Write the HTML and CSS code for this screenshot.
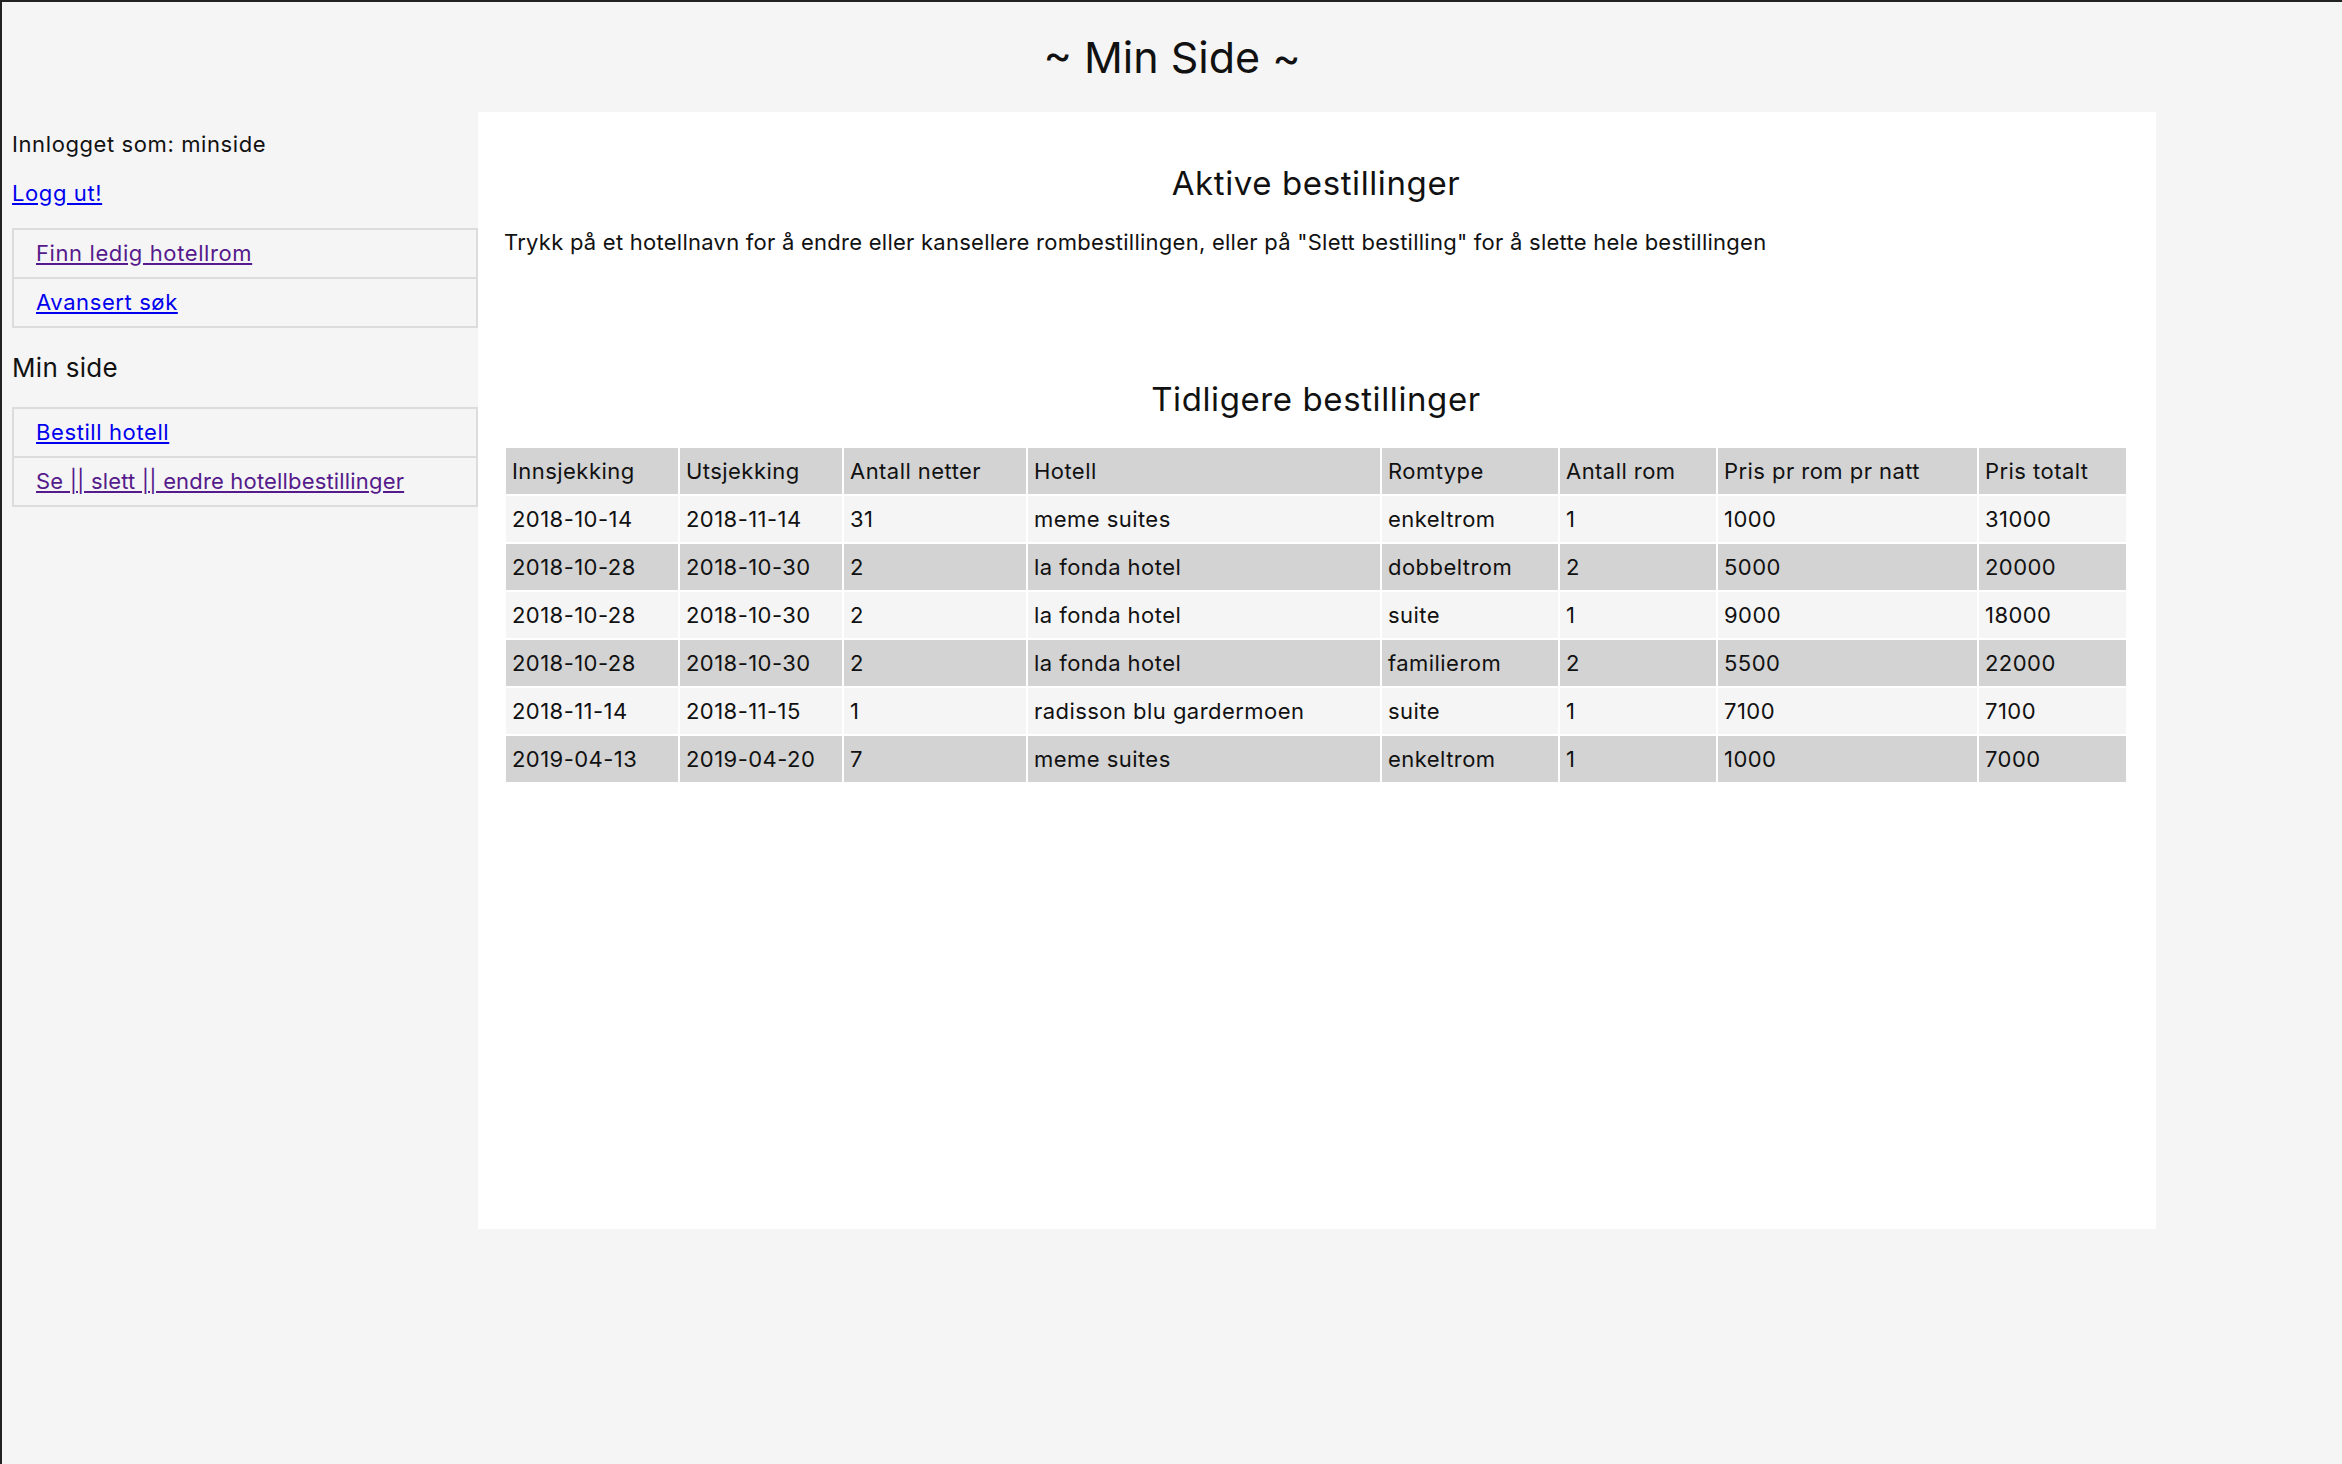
FILE: index.html
```html
<!DOCTYPE html>
<html lang="no">
<head>
<meta charset="utf-8">
<title>Min Side</title>
<link rel="stylesheet" href="styles.css">
</head>
<body>
<header class="top">
  <h1 class="page-title">~ Min Side ~</h1>
</header>
<div class="layout">
  <aside class="sidebar">
    <p class="login">Innlogget som: minside</p>
    <p class="logout"><a href="#" class="link">Logg ut!</a></p>
    <ul class="nav">
      <li class="nav-item"><a href="#" class="link visited">Finn ledig hotellrom</a></li>
      <li class="nav-item"><a href="#" class="link">Avansert søk</a></li>
    </ul>
    <h3 class="side-heading">Min side</h3>
    <ul class="nav">
      <li class="nav-item"><a href="#" class="link">Bestill hotell</a></li>
      <li class="nav-item"><a href="#" class="link visited tight">Se || slett || endre hotellbestillinger</a></li>
    </ul>
  </aside>
  <main class="content">
    <section class="active">
      <h2 class="section-title">Aktive bestillinger</h2>
      <p class="hint">Trykk på et hotellnavn for å endre eller kansellere rombestillingen, eller på "Slett bestilling" for å slette hele bestillingen</p>
    </section>
    <section class="history">
      <h2 class="section-title">Tidligere bestillinger</h2>
      <table class="orders">
        <thead>
          <tr><th>Innsjekking</th><th>Utsjekking</th><th>Antall netter</th><th>Hotell</th><th>Romtype</th><th>Antall rom</th><th>Pris pr rom pr natt</th><th>Pris totalt</th></tr>
        </thead>
        <tbody>
          <tr><td>2018-10-14</td><td>2018-11-14</td><td>31</td><td>meme suites</td><td>enkeltrom</td><td>1</td><td>1000</td><td>31000</td></tr>
          <tr><td>2018-10-28</td><td>2018-10-30</td><td>2</td><td>la fonda hotel</td><td>dobbeltrom</td><td>2</td><td>5000</td><td>20000</td></tr>
          <tr><td>2018-10-28</td><td>2018-10-30</td><td>2</td><td>la fonda hotel</td><td>suite</td><td>1</td><td>9000</td><td>18000</td></tr>
          <tr><td>2018-10-28</td><td>2018-10-30</td><td>2</td><td>la fonda hotel</td><td>familierom</td><td>2</td><td>5500</td><td>22000</td></tr>
          <tr><td>2018-11-14</td><td>2018-11-15</td><td>1</td><td>radisson blu gardermoen</td><td>suite</td><td>1</td><td>7100</td><td>7100</td></tr>
          <tr><td>2019-04-13</td><td>2019-04-20</td><td>7</td><td>meme suites</td><td>enkeltrom</td><td>1</td><td>1000</td><td>7000</td></tr>
        </tbody>
      </table>
    </section>
  </main>
</div>
</body>
</html>
```
FILE: styles.css
```css
html {
  background: #f5f5f5;
}
body {
  margin: 0;
  min-height: 100vh;
  box-sizing: border-box;
  border-top: 2px solid #222;
  border-left: 2px solid #222;
  background: #f5f5f5;
  color: #111;
  font-family: "Inter", "Open Sans", sans-serif;
  font-size: 22px;
  line-height: 30px;
  letter-spacing: 0.45px;
}
.top {
  height: 110px;
  padding-top: 30px;
  box-sizing: border-box;
}
.page-title {
  margin: 0;
  text-align: center;
  font-weight: 400;
  font-size: 43px;
  line-height: 50px;
  letter-spacing: 0;
}
.layout {
  display: flex;
  align-items: flex-start;
  padding-left: 10px;
}
.sidebar {
  width: 466px;
  flex: none;
  letter-spacing: 0.6px;
}
.login {
  margin: 17px 0 0 0;
}
.logout {
  margin: 19px 0 0 0;
}
.link {
  color: #0000ee;
}
.link.visited {
  color: #551a8b;
}
.link.tight {
  letter-spacing: 0.17px;
}
.nav {
  list-style: none;
  margin: 20px 0 0 0;
  padding: 0;
  border: 2px solid #dcdcdc;
}
.nav-item {
  padding: 8px 22px 9px;
}
.nav-item + .nav-item {
  border-top: 2px solid #dcdcdc;
}
.side-heading {
  margin: 24px 0 23px 0;
  font-weight: 400;
  font-size: 26px;
  line-height: 32px;
  letter-spacing: 0.3px;
}
.content {
  width: 1678px;
  flex: none;
  min-height: 1117px;
  box-sizing: border-box;
  background: #fff;
  padding: 51px 28px 0 26px;
}
.section-title {
  margin: 0;
  text-align: center;
  font-weight: 400;
  font-size: 33px;
  line-height: 40px;
  letter-spacing: 0.6px;
}
.hint {
  margin: 24px 0 0 0;
  letter-spacing: 0.25px;
}
.history {
  margin-top: 122px;
}
.orders {
  margin-top: 27px;
  width: 100%;
  table-layout: fixed;
  border-spacing: 2px;
  font-size: 22px;
}
.orders th,
.orders td {
  text-align: left;
  font-weight: 400;
  padding: 8px 6px;
  line-height: 30px;
  white-space: nowrap;
}
.orders thead th {
  background: #d3d3d3;
}
.orders tbody tr:nth-child(odd) td {
  background: #f5f5f5;
}
.orders tbody tr:nth-child(even) td {
  background: #d3d3d3;
}
.orders th:nth-child(1) { width: 160px; }
.orders th:nth-child(2) { width: 150px; }
.orders th:nth-child(3) { width: 170px; }
.orders th:nth-child(4) { width: 340px; }
.orders th:nth-child(5) { width: 164px; }
.orders th:nth-child(6) { width: 144px; }
.orders th:nth-child(7) { width: 247px; }
```
